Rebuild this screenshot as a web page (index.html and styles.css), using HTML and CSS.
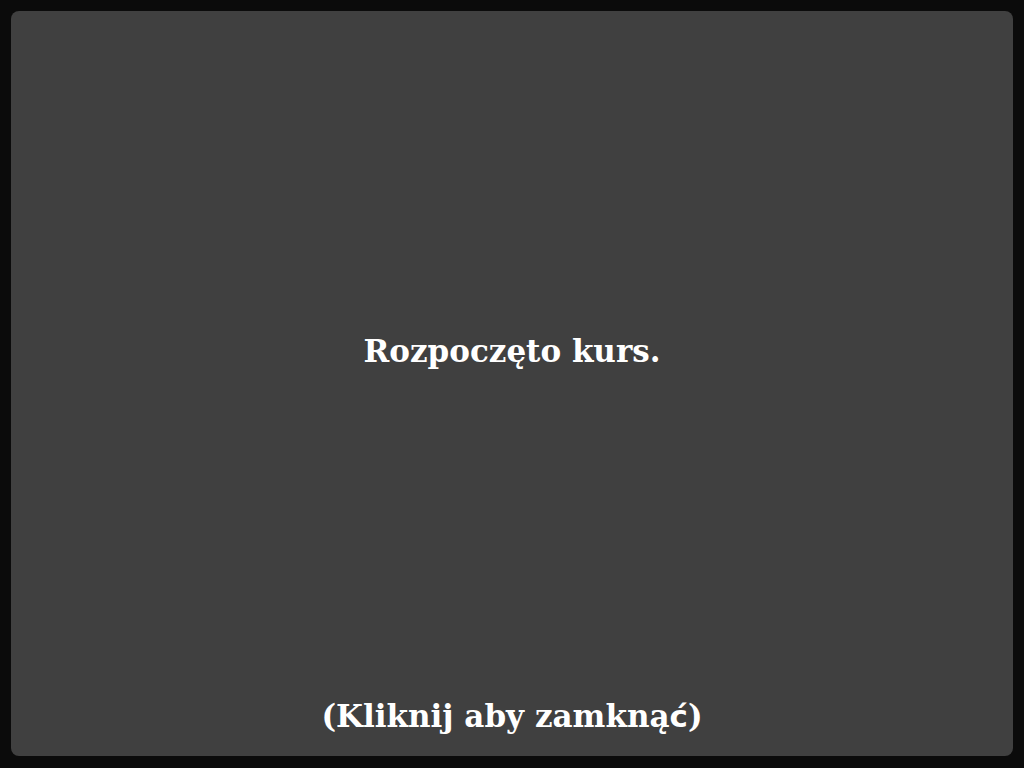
FILE: index.html
```html
<!DOCTYPE html>
<html>
<head>
<meta charset="utf-8">
<link rel="stylesheet" href="styles.css">
</head>
<body>
<div class="panel">
  <div class="message">Rozpoczęto kurs.</div>
  <div class="close">(Kliknij aby zamkną<span class="fallback">ć</span>)</div>
</div>
</body>
</html>
```

FILE: styles.css
```css
html, body {
  margin: 0;
  padding: 0;
  width: 1024px;
  height: 768px;
  background: #0b0b0b;
  overflow: hidden;
}
body {
  padding: 11px;
  box-sizing: border-box;
}
.panel {
  width: 1002px;
  height: 745px;
  background: #404040;
  border-radius: 8px;
  display: flex;
  flex-direction: column;
  align-items: center;
  font-family: "DejaVu Serif", serif;
  font-weight: bold;
  color: #ffffff;
  font-size: 31px;
}
.message {
  margin-top: 320px;
  line-height: 40px;
}
.close {
  margin-top: auto;
  margin-bottom: 20px;
  line-height: 40px;
}
.fallback {
  font-family: "DejaVu Sans", sans-serif;
}
```
